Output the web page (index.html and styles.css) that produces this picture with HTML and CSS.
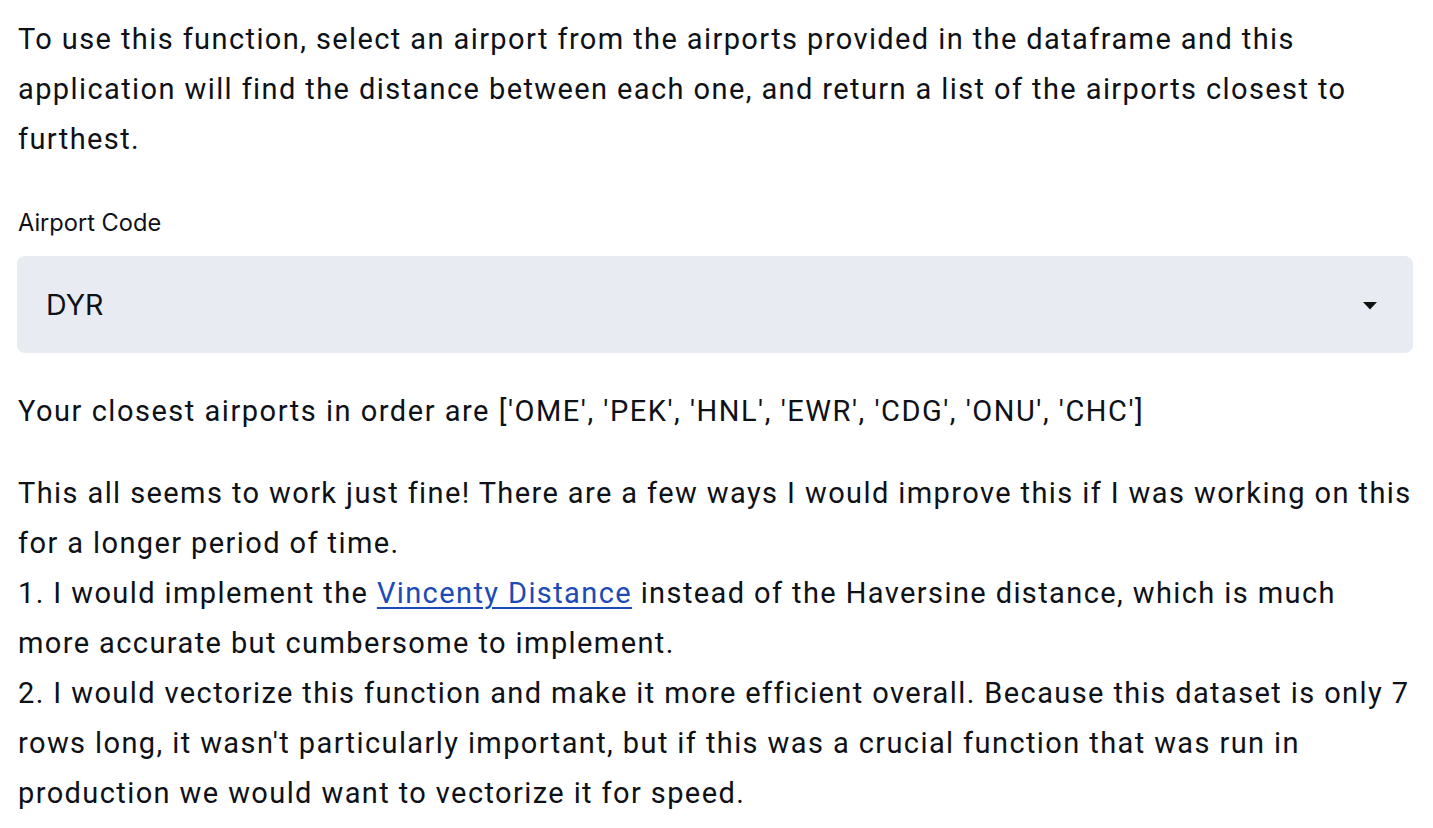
FILE: index.html
```html
<!DOCTYPE html>
<html>
<head>
<meta charset="utf-8">
<link rel="stylesheet" href="styles.css">
</head>
<body>
<main class="page">
  <p class="text intro">To use this function, select an airport from the airports provided in the dataframe and this<br>application will find the distance between each one, and return a list of the airports closest to<br>furthest.</p>
  <div class="field">
    <label class="label">Airport Code</label>
    <div class="select">
      <span class="value">DYR</span>
      <svg class="caret" width="14" height="8" viewBox="0 0 14 8"><path d="M0 0 H14 L7 7.5 Z" fill="#111"/></svg>
    </div>
  </div>
  <p class="text result">Your closest airports in order are ['OME', 'PEK', 'HNL', 'EWR', 'CDG', 'ONU', 'CHC']</p>
  <p class="text notes">This all seems to work just fine! There are a few ways I would improve this if I was working on this<br>for a longer period of time.<br>1. I would implement the <a class="link" href="#">Vincenty Distance</a> instead of the Haversine distance, which is much<br>more accurate but cumbersome to implement.<br>2. I would vectorize this function and make it more efficient overall. Because this dataset is only 7<br>rows long, it wasn't particularly important, but if this was a crucial function that was run in<br>production we would want to vectorize it for speed.</p>
</main>
</body>
</html>
```

FILE: styles.css
```css
html, body {
  margin: 0;
  padding: 0;
  background: #ffffff;
}
.page {
  padding: 14px 0 0 18px;
  width: 1395px;
  color: #0e1117;
  font-family: Roboto, "Liberation Sans", sans-serif;
}
.text {
  margin: 0;
  font-size: 29px;
  line-height: 50px;
  letter-spacing: 1.4px;
  white-space: nowrap;
}
.field {
  margin-top: 42px;
  display: flex;
  flex-direction: column;
}
.label {
  font-family: Inter, "Liberation Sans", sans-serif;
  font-size: 23.6px;
  line-height: 34px;
  margin-bottom: 16px;
}
.select {
  height: 97px;
  margin-left: -1px;
  background: #e9ebf2;
  border-radius: 8px;
  display: flex;
  align-items: center;
  justify-content: space-between;
  padding: 0 36px 0 29px;
}
.value {
  font-family: Inter, "Liberation Sans", sans-serif;
  font-size: 28.6px;
}
.caret {
  display: block;
  margin-top: 2px;
}
.result {
  margin-top: 33px;
  letter-spacing: 1.52px;
}
.notes {
  margin-top: 32px;
}
.link {
  color: #1c4ab6;
  text-decoration: underline;
  text-underline-offset: 4px;
  text-decoration-thickness: 2px;
}
```
